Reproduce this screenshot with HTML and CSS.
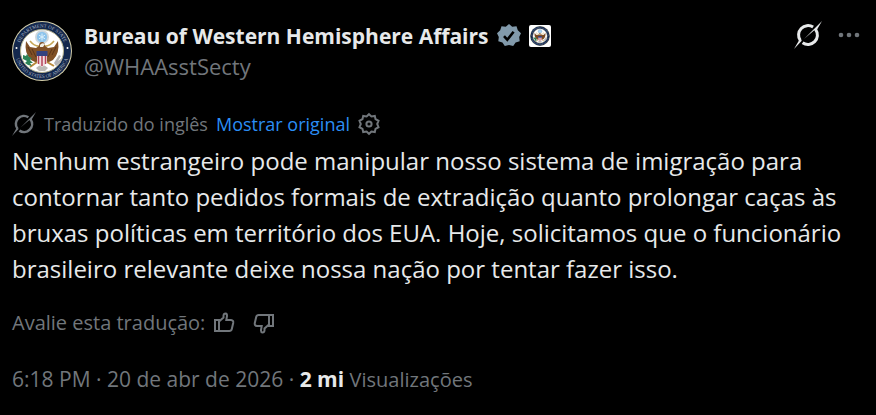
FILE: index.html
```html
<!DOCTYPE html>
<html lang="pt-BR">
<head>
    <meta charset="UTF-8">
    <meta name="viewport" content="width=device-width, initial-scale=1.0">
    <title>Bureau of Western Hemisphere Affairs</title>
    <link rel="stylesheet" href="styles.css">
</head>
<body>

    <article class="post">
        <header class="post-header">
            <svg class="avatar" viewBox="0 0 60 60" role="img" aria-label="Bureau of Western Hemisphere Affairs">
                <g id="seal">
                    <circle cx="30" cy="30" r="30" fill="#d5cfaa"/>
                    <circle cx="30" cy="30" r="29" fill="#14284d"/>
                    <circle cx="30" cy="30" r="21.5" fill="#fff" stroke="#b8b48f" stroke-width="1"/>
                    <path id="ring-top" d="M6.500 30a23.500 23.500 0 0 1 47 0" fill="none"/>
                    <path id="ring-bottom" d="M3 30a27 27 0 0 0 54 0" fill="none"/>
                    <text class="seal-text"><textPath href="#ring-top" startOffset="50%">DEPARTMENT OF STATE</textPath></text>
                    <text class="seal-text"><textPath href="#ring-bottom" startOffset="50%">UNITED STATES OF AMERICA</textPath></text>
                    <circle cx="4.500" cy="27" r="1" fill="#fff"/>
                    <circle cx="55.500" cy="27" r="1" fill="#fff"/>
                    <circle cx="30" cy="16" r="7" fill="#cfd8dd"/>
                    <circle cx="30" cy="16" r="5.200" fill="#8dc4ec"/>
                    <path d="M30 12.500v7M27 14.200l6 3.600M27 17.800l6-3.600" stroke="#d9effb" stroke-width="1"/>
                    <path d="M18 20q5 6 10 5M42 20q-5 6-10 5" fill="none" stroke="#c5a554" stroke-width="1.600"/>
                    <path d="M14 20q-2 12 5 19l6 3 2-4 3 3 3-3 2 4 6-3q7-7 5-19l-4 6-6 1-3-2q0-4-3-4t-3 4l-3 2-6-1z" fill="#805026"/>
                    <path d="M16 26l4 8M20 28l4 8M44 26l-4 8M40 28l-4 8" stroke="#5a3419" stroke-width="1"/>
                    <path d="M28 24q2-3 5-1l-2 3h-3z" fill="#f1eee4"/>
                    <path d="M25 41l-7 5M35 41l7 4" stroke="#b98b3d" stroke-width="2"/>
                    <path d="M24 47q6-6 12 0l-3 3h-6z" fill="#bcbab5"/>
                    <path d="M25 33h10v8q-2 4-5 5-3-1-5-5z" fill="#f0dfe0"/>
                    <path d="M26.500 34v9M30 34v11M33.500 34v9" stroke="#b6445a" stroke-width="1.500"/>
                    <path d="M24.500 30h11v5h-11z" fill="#34427e"/>
                    <path d="M11 34l3 1 1-2 2 3 3 1-2 2 3 3-3 0 2 3-4-1-3-2 2-2-4-2z" fill="#2d8357"/>
                    <path d="M42 42l5-8 2 1-3 5 4-3-1 4-5 4z" fill="#b4b3b5"/>
                </g>
            </svg>
            <div class="author">
                <div class="name-row">
                    <a class="name" href="#">Bureau of Western Hemisphere Affairs</a>
                    <svg class="verified" viewBox="0 0 24 24" aria-hidden="true">
                        <path fill="#829aab" d="M12 0l3.200 2.800 4.300-.6 1.300 4.100 3.200 2.900-1.800 3.800.5 4.300-4.100 1.200-2.400 3.600-4.200-1.200-4.200 1.200-2.400-3.600-4.100-1.200.5-4.300L0 9.200l3.200-2.900 1.300-4.100 4.300.6z"/>
                        <path d="M7 12.200l3.300 3.500 6.300-8" fill="none" stroke="#000" stroke-width="2.600"/>
                    </svg>
                    <span class="affiliate"><svg viewBox="0 0 60 60" aria-hidden="true"><use href="#seal"/></svg></span>
                </div>
                <a class="handle" href="#">@WHAAsstSecty</a>
            </div>
            <div class="header-actions">
                <button class="icon-btn light" type="button" aria-label="Explicar esta publicação">
                    <svg class="icon-lg" viewBox="0 0 28 28">
                        <g id="slash-ring">
                            <path d="M6.300 19.400A9.400 9.400 0 0 1 19.100 6.100M21.700 8.600A9.400 9.400 0 0 1 8.600 21.700" fill="none" stroke="currentColor" stroke-width="3"/>
                            <path d="M28 0L22.500 9.500L20 9.500L10 18L17.500 10.500zM0 28L5.500 18.500L8 19.500z"/>
                        </g>
                    </svg>
                </button>
                <button class="icon-btn" type="button" aria-label="Mais">
                    <svg class="more" viewBox="0 0 22 6"><circle cx="3" cy="3" r="2.300"/><circle cx="11" cy="3" r="2.300"/><circle cx="19" cy="3" r="2.300"/></svg>
                </button>
            </div>
        </header>

        <div class="translation">
            <svg class="icon-md" viewBox="0 0 28 28" aria-hidden="true"><use href="#slash-ring"/></svg>
            <span>Traduzido do inglês</span>
            <a class="original" href="#">Mostrar original</a>
            <button class="icon-btn" type="button" aria-label="Configurações de tradução">
                <svg class="icon-sm outline" viewBox="0 0 22 22">
                    <path d="M11 1.200L13.400 3.400L16.800 2.900L17.500 6.100L20.500 7.800L19.200 11L20.500 14.200L17.500 15.900L16.800 19.100L13.400 18.600L11 20.800L8.600 18.600L5.200 19.100L4.500 15.900L1.500 14.200L2.800 11L1.500 7.800L4.500 6.100L5.200 2.900L8.600 3.400Z"/>
                    <circle cx="11" cy="11" r="2.600"/>
                </svg>
            </button>
        </div>

        <p class="post-text">Nenhum estrangeiro pode manipular nosso sistema de imigração para contornar tanto pedidos formais de extradição quanto prolongar caças às bruxas políticas em território dos EUA. Hoje, solicitamos que o funcionário brasileiro relevante deixe nossa nação por tentar fazer isso.</p>

        <div class="rating">
            <span>Avalie esta tradução:</span>
            <button class="icon-btn" type="button" aria-label="Boa tradução">
                <svg class="icon-sm outline" viewBox="0 0 22 22">
                    <path d="M2 8h4v11H2zM6 9.500L10.500 5.500V3.500Q10.700 1.500 12.500 1.500Q14.200 1.700 14 4L13.300 8H18Q20.700 8.300 20.200 11L18.800 17Q18.300 19 16.300 19H6"/>
                </svg>
            </button>
            <button class="icon-btn" type="button" aria-label="Tradução ruim">
                <svg class="icon-sm outline flipped" viewBox="0 0 22 22">
                    <path d="M2 8h4v11H2zM6 9.500L10.500 5.500V3.500Q10.700 1.500 12.500 1.500Q14.200 1.700 14 4L13.300 8H18Q20.700 8.300 20.200 11L18.800 17Q18.300 19 16.300 19H6"/>
                </svg>
            </button>
        </div>

        <footer class="meta">
            <a href="#"><time datetime="2026-04-20T18:18">6:18 PM · 20 de abr de 2026</time></a> · <strong>2 mi</strong> <span class="views">Visualizações</span>
        </footer>
    </article>

</body>
</html>
```

FILE: styles.css
```css
* {
    box-sizing: border-box;
}
body {
    margin: 0;
    background-color: #000;
    color: #e7e9ea;
    font-family: "Open Sans", "Noto Sans", sans-serif;
}
a {
    color: inherit;
    text-decoration: none;
}
svg {
    display: block;
    flex-shrink: 0;
    overflow: visible;
}
.seal-text {
    fill: #a9b3c2;
    font-family: "Liberation Serif", serif;
    font-size: 5px;
    text-anchor: middle;
}
.post {
    padding: 21px 16px 20px 12px;
}
.post-header {
    display: flex;
    gap: 12px;
}
.avatar {
    width: 60px;
    height: 60px;
}
.author {
    flex: 1;
    line-height: 30px;
}
.name-row {
    display: flex;
    align-items: center;
    gap: 8px;
    height: 30px;
}
.name {
    font-size: 21px;
    font-weight: 700;
    white-space: nowrap;
}
.verified {
    width: 24px;
    height: 24px;
}
.affiliate {
    padding: 1px;
    border-radius: 2px;
    background-color: #fff;
}
.affiliate svg {
    width: 20px;
    height: 20px;
}
.handle {
    color: #71767b;
    font-size: 22px;
}
.header-actions {
    display: flex;
    align-items: center;
    gap: 16px;
    height: 28px;
}
.icon-btn {
    padding: 0;
    border: none;
    background: none;
    color: #71767b;
    cursor: pointer;
}
.icon-btn.light {
    color: #e7e9ea;
}
.icon-lg, .icon-md, .more {
    fill: currentColor;
}
.icon-lg {
    width: 28px;
    height: 28px;
}
.icon-md {
    width: 24px;
    height: 24px;
}
.icon-sm {
    width: 22px;
    height: 22px;
}
.more {
    width: 22px;
    height: 6px;
}
.outline {
    fill: none;
    stroke: currentColor;
    stroke-width: 2;
}
.flipped {
    transform: rotate(180deg);
}
.translation, .rating {
    display: flex;
    align-items: center;
    gap: 8px;
    color: #71767b;
    line-height: 24px;
}
.translation {
    margin-top: 28px;
    font-size: 18px;
}
.original {
    color: #2b8ef5;
}
.post-text {
    margin: 7px 0 24px;
    font-size: 24px;
    line-height: 36px;
}
.rating {
    font-size: 20px;
}
.rating .icon-btn + .icon-btn {
    margin-left: 10px;
}
.meta {
    margin-top: 28px;
    color: #71767b;
    font-size: 21px;
    line-height: 32px;
}
.meta strong {
    color: #e7e9ea;
}
.views {
    font-size: 20px;
}
```
